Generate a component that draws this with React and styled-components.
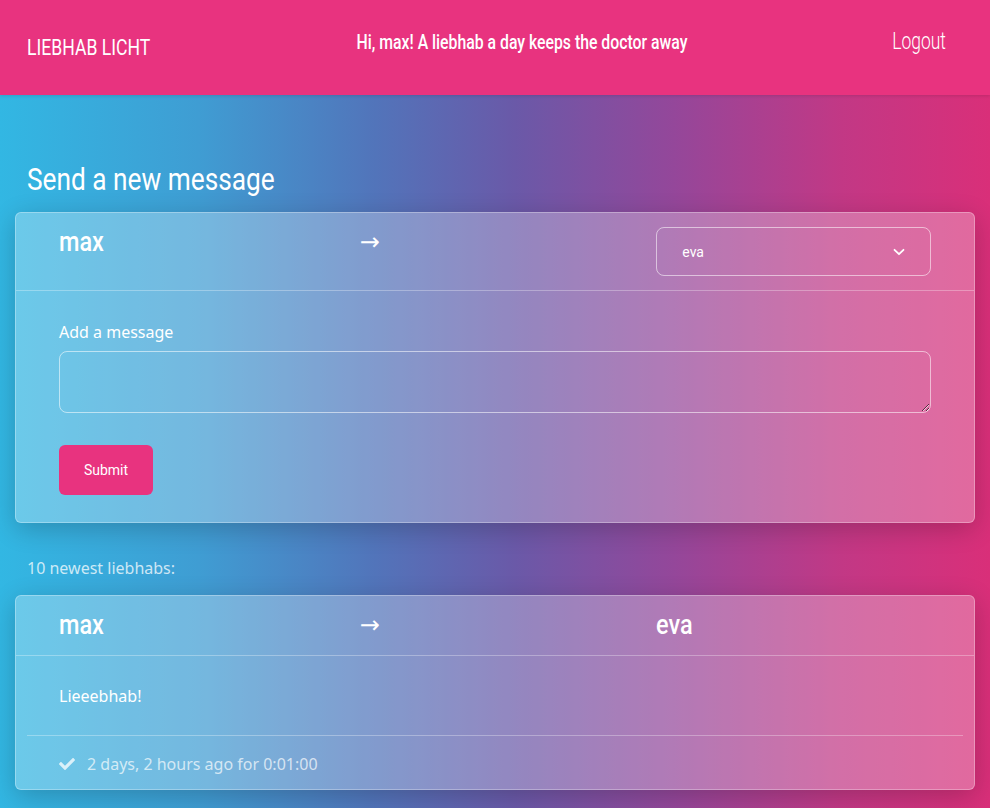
import React from 'react';
import styled, { createGlobalStyle } from 'styled-components';
import { FaCheck } from 'react-icons/fa';

const GlobalStyle = createGlobalStyle`
  html, body {
    margin: 0;
    padding: 0;
  }
  body {
    font-family: "Noto Sans", "Open Sans", sans-serif;
    color: #fff;
    min-height: 808px;
    background: linear-gradient(90deg, #32b7e3 0%, #3f9dd3 20%, #5274ba 38%, #6a59a8 52%, #94479a 68%, #c23885 85%, #d92f79 100%);
  }
`;

// no narrow grotesque installed, so Roboto squeezed horizontally
const narrow = `Roboto, "Liberation Sans", sans-serif`;

const NavBar = styled.nav`
  height: 95px;
  background: #e8337f;
  display: flex;
  align-items: center;
  padding: 0 44px 0 27px;
  font-family: ${narrow};
  box-shadow: 0 1px 3px rgba(0, 0, 0, 0.12);
`;

const Brand = styled.div`
  width: 124px;
  font-size: 22px;
  transform: scaleX(0.8);
  transform-origin: left center;
  white-space: nowrap;
`;

const Motto = styled.div`
  flex: 1;
  text-align: center;
  font-size: 20px;
  font-weight: 500;
  transform: translateY(-6px) scaleX(0.79);
  white-space: nowrap;
`;

const Logout = styled.a`
  width: 53px;
  display: flex;
  justify-content: flex-end;
  font-size: 23px;
  font-weight: 300;
  transform: translateY(-6px) scaleX(0.76);
  transform-origin: right center;
  white-space: nowrap;
  cursor: pointer;
`;

const Main = styled.main`
  padding: 63px 15px 20px;
`;

const Title = styled.h2`
  margin: 0 0 12px 12px;
  font-family: ${narrow};
  font-size: 32px;
  font-weight: 400;
  line-height: 42px;
  transform: scaleX(0.82);
  transform-origin: left center;
`;

const Card = styled.section`
  background: rgba(255, 255, 255, 0.28);
  border: 1px solid rgba(255, 255, 255, 0.3);
  border-radius: 6px;
  box-shadow: 0 6px 26px rgba(0, 0, 0, 0.2);
`;

const CardHead = styled.div`
  display: grid;
  grid-template-columns: repeat(3, 1fr);
  column-gap: 24px;
  align-items: start;
  padding: 14px 43px;
  border-bottom: 1px solid rgba(255, 255, 255, 0.3);
`;

const Name = styled.div`
  font-family: ${narrow};
  font-size: 27px;
  font-weight: 500;
  line-height: 31px;
  transform: scaleX(0.87);
  transform-origin: left center;
`;

const Arrow = styled.div`
  font-family: "DejaVu Sans", sans-serif;
  font-size: 24px;
  line-height: 31px;
  padding-left: 2px;
`;

const SelectBox = styled.div`
  height: 47px;
  border: 1px solid rgba(255, 255, 255, 0.55);
  border-radius: 8px;
  display: flex;
  align-items: center;
  justify-content: space-between;
  padding: 0 25px;
  font-family: Roboto, sans-serif;
  font-size: 14px;
`;

const Chevron = () => (
  <svg width="12" height="8" viewBox="0 0 12 8" fill="none">
    <path d="M1.5 1.8 6 6.2 10.5 1.8" stroke="#fff" strokeWidth="1.8" strokeLinecap="round" strokeLinejoin="round" />
  </svg>
);

const CardBody = styled.div`
  padding: ${p => p.$pad || '29px 43px 27px'};
`;

const Label = styled.label`
  display: block;
  font-size: 16px;
  line-height: 24px;
  margin-bottom: 7px;
`;

const TextArea = styled.textarea`
  display: block;
  box-sizing: border-box;
  width: 100%;
  height: 62px;
  background: transparent;
  border: 1px solid rgba(255, 255, 255, 0.55);
  border-radius: 8px;
  color: #fff;
  font-family: "Noto Sans", sans-serif;
  font-size: 16px;
  padding: 8px 12px;
  outline: none;
`;

const Submit = styled.button`
  margin-top: 32px;
  width: 94px;
  height: 50px;
  border: none;
  border-radius: 6px;
  background: #e8337f;
  color: #fff;
  font-family: Roboto, sans-serif;
  font-size: 14px;
  cursor: pointer;
`;

const SubTitle = styled.p`
  margin: 33px 0 15px 12px;
  font-size: 16px;
  line-height: 24px;
  color: rgba(255, 255, 255, 0.75);
`;

const Message = styled.p`
  margin: 0;
  font-size: 16px;
  line-height: 24px;
`;

const CardFoot = styled.div`
  margin: 0 11px;
  padding: 16px 32px 13px;
  border-top: 1px solid rgba(255, 255, 255, 0.3);
  display: flex;
  align-items: center;
  gap: 12px;
  font-size: 16px;
  line-height: 24px;
  color: rgba(255, 255, 255, 0.7);
`;

export default function App() {
  return (
    <>
      <GlobalStyle />
      <NavBar>
        <Brand>LIEBHAB LICHT</Brand>
        <Motto>Hi, max! A liebhab a day keeps the doctor away</Motto>
        <Logout>Logout</Logout>
      </NavBar>
      <Main>
        <Title>Send a new message</Title>
        <Card>
          <CardHead>
            <Name>max</Name>
            <Arrow>→</Arrow>
            <SelectBox>
              <span>eva</span>
              <Chevron />
            </SelectBox>
          </CardHead>
          <CardBody>
            <Label>Add a message</Label>
            <TextArea />
            <Submit>Submit</Submit>
          </CardBody>
        </Card>

        <SubTitle>10 newest liebhabs:</SubTitle>
        <Card>
          <CardHead>
            <Name>max</Name>
            <Arrow>→</Arrow>
            <Name>eva</Name>
          </CardHead>
          <CardBody $pad="28px 43px 27px">
            <Message>Lieeebhab!</Message>
          </CardBody>
          <CardFoot>
            <FaCheck size={16} color="rgba(255,255,255,0.75)" />
            <span>2 days, 2 hours ago for 0:01:00</span>
          </CardFoot>
        </Card>
      </Main>
    </>
  );
}
